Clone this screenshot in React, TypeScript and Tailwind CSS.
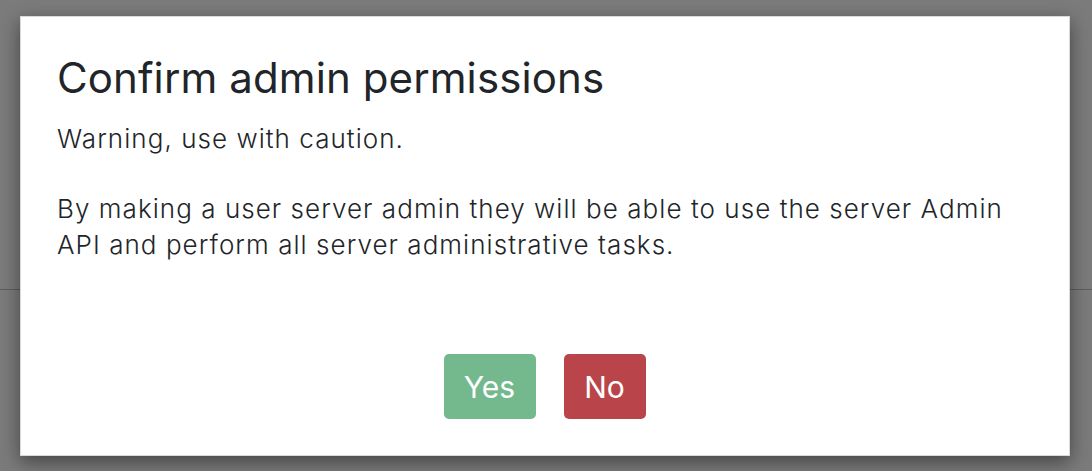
export default function App() {
  return (
    <div className="relative h-[471px] w-[1092px] overflow-hidden bg-[#7b7b7b] font-['Inter','Liberation_Sans',sans-serif] text-[#212529]">
      {/* table rule seen behind the backdrop */}
      <div className="absolute left-0 right-0 top-[289px] h-px bg-[#5e5e5e]" />

      <div className="relative ml-[20px] mt-[16px] flex h-[440px] w-[1050px] flex-col border border-[#d9d9d9] bg-white px-[36px] pb-[36px] pt-[36px] shadow-[0_6px_18px_rgba(0,0,0,0.45)]">
        <h1 className="text-[42px] leading-[50px] font-normal tracking-[0.1px]">Confirm admin permissions</h1>
        <p className="mt-[18px] text-[26px] leading-[36px] font-light tracking-[1.05px]">Warning, use with caution.</p>
        <p className="mt-[34px] text-[26px] leading-[36px] font-light tracking-[1.05px]">
          By making a user server admin they will be able to use the server Admin API and perform all server
          administrative tasks.
        </p>

        <div className="mt-auto flex justify-center gap-[28px] pr-px">
          <button className="h-[65px] w-[92px] rounded-[5px] bg-[#74b98e] text-[30px] leading-none text-white">
            Yes
          </button>
          <button className="h-[65px] w-[82px] rounded-[5px] bg-[#b9454a] text-[30px] leading-none text-white">
            No
          </button>
        </div>
      </div>
    </div>
  )
}
